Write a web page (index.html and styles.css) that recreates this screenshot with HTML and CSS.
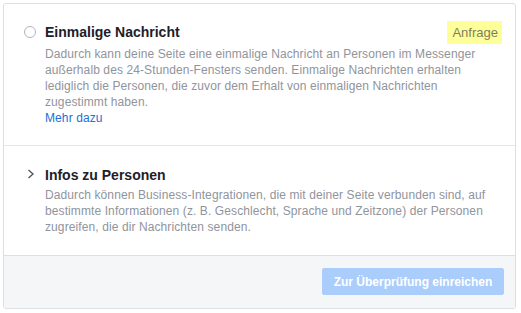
FILE: index.html
```html
<!DOCTYPE html>
<html>
<head>
<meta charset="utf-8">
<link rel="stylesheet" href="styles.css">
</head>
<body>
<div class="card">
  <div class="section first">
    <div class="icon-col">
      <span class="radio"></span>
    </div>
    <div class="content">
      <div class="head">
        <div class="title">Einmalige Nachricht</div>
        <span class="badge">Anfrage</span>
      </div>
      <p class="desc">Dadurch kann deine Seite eine einmalige Nachricht an Personen im Messenger außerhalb des 24-Stunden-Fensters senden. Einmalige Nachrichten erhalten lediglich die Personen, die zuvor dem Erhalt von einmaligen Nachrichten zugestimmt haben.</p>
      <a class="more" href="#">Mehr dazu</a>
    </div>
  </div>
  <div class="section second">
    <div class="icon-col">
      <svg class="chev" width="8" height="10" viewBox="0 0 8 10"><path d="M1.5 1 L6 5 L1.5 9" fill="none" stroke="#4b4f56" stroke-width="1.3"/></svg>
    </div>
    <div class="content">
      <div class="title">Infos zu Personen</div>
      <p class="desc">Dadurch können Business-Integrationen, die mit deiner Seite verbunden sind, auf bestimmte Informationen (z. B. Geschlecht, Sprache und Zeitzone) der Personen zugreifen, die dir Nachrichten senden.</p>
    </div>
  </div>
  <div class="footer">
    <button class="submit" disabled>Zur Überprüfung einreichen</button>
  </div>
</div>
</body>
</html>
```
FILE: styles.css
```css
html, body {
  margin: 0;
  padding: 0;
  background: #fff;
}
body {
  font-family: "Liberation Sans", Arial, sans-serif;
}
.card {
  margin: 3px;
  width: 513px;
  height: 306px;
  box-sizing: border-box;
  border: 1px solid #dddfe2;
  border-radius: 3px;
  box-shadow: 0 0 1px rgba(0,0,0,0.05);
  display: flex;
  flex-direction: column;
  overflow: hidden;
}
.section {
  display: flex;
  padding: 0 13px 0 20px;
}
.first {
  height: 142px;
  border-bottom: 1px solid #e5e6e9;
  padding-top: 19px;
  box-sizing: border-box;
}
.second {
  height: 110px;
  border-bottom: 1px solid #dddfe2;
  padding-top: 20px;
  box-sizing: border-box;
}
.icon-col {
  width: 21px;
  flex: none;
  padding-top: 3px;
}
.radio {
  display: block;
  width: 10px;
  height: 10px;
  border: 1px solid #b0b5bb;
  border-radius: 50%;
}
.chev {
  display: block;
  margin: 0 0 0 3px;
}
.content {
  flex: 1;
}
.head {
  display: flex;
  justify-content: space-between;
  align-items: flex-start;
}
.title {
  font-size: 14px;
  font-weight: bold;
  color: #1d2129;
  line-height: 18px;
}
.badge {
  background: #ffff99;
  color: #7d7f62;
  font-size: 13px;
  line-height: 23px;
  padding: 0 4px 0 5px;
  margin-top: -2px;
}
.desc {
  margin: 3px 0 0;
  font-size: 12px;
  line-height: 16px;
  letter-spacing: 0.1px;
  color: #90949c;
}
.first .desc {
  margin-top: 2px;
  padding-right: 18px;
}
.more {
  display: block;
  font-size: 12px;
  line-height: 16px;
  letter-spacing: 0.1px;
  color: #216fdb;
  text-decoration: none;
}
.footer {
  flex: 1;
  background: #f5f6f7;
  display: flex;
  justify-content: flex-end;
  align-items: flex-start;
  padding: 12px 11px 0 0;
}
.submit {
  font-family: "Liberation Sans", Arial, sans-serif;
  font-size: 12px;
  font-weight: bold;
  color: #fff;
  background: #aacdfb;
  border: 1px solid #aacdfb;
  border-radius: 2px;
  height: 27px;
  width: 182px;
  padding: 0;
}
```
